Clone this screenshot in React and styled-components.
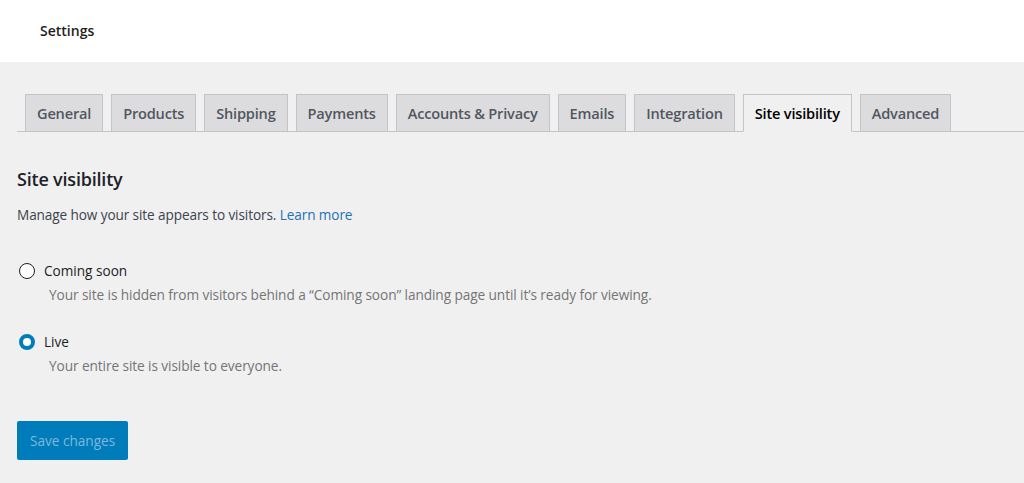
import React, { useState } from "react";
import styled, { createGlobalStyle } from "styled-components";

const GlobalStyle = createGlobalStyle`
  body {
    margin: 0;
    background: #f0f0f1;
    font-family: "Open Sans", "Noto Sans", sans-serif;
    color: #1e1e1e;
  }
`;

const TopBar = styled.header`
  height: 62px;
  background: #fff;
  display: flex;
  align-items: center;
  padding: 0 40px;
  box-sizing: border-box;
`;

const PageTitle = styled.h1`
  margin: 0;
  font-size: 14px;
  font-weight: 600;
  color: #1e1e1e;
  position: relative;
  top: -1px;
`;

const Main = styled.main`
  padding: 32px 0 0 17px;
`;

const TabBar = styled.nav`
  display: flex;
  gap: 8px;
  padding-left: 8px;
  border-bottom: 1px solid #c3c4c7;
  height: 37px;
  align-items: flex-end;
`;

const Tab = styled.button`
  box-sizing: border-box;
  height: ${(p) => (p.$active ? "38px" : "37px")};
  margin-bottom: ${(p) => (p.$active ? "-1px" : "0")};
  padding: 0 11px;
  border: 1px solid #c3c4c7;
  border-bottom: ${(p) => (p.$active ? "1px solid #f0f0f1" : "none")};
  background: ${(p) => (p.$active ? "#f0f0f1" : "#dcdcde")};
  color: ${(p) => (p.$active ? "#000" : "#50575e")};
  font-family: inherit;
  font-size: 14.6px;
  font-weight: 600;
  cursor: pointer;
  letter-spacing: -0.2px;
`;

const Section = styled.section`
  padding-top: 35px;
`;

const Heading = styled.h2`
  margin: 0;
  font-size: 18px;
  font-weight: 600;
  color: #1d2327;
  letter-spacing: -0.2px;
`;

const Intro = styled.p`
  margin: 14px 0 0;
  font-size: 13.6px;
  color: #3c434a;
  letter-spacing: -0.1px;

  a {
    color: #2271b1;
    text-decoration: none;
  }
`;

const Options = styled.div`
  display: flex;
  flex-direction: column;
  gap: 28px;
  margin-top: 37px;
`;

const Option = styled.label`
  display: grid;
  grid-template-columns: 16px 1fr;
  column-gap: 9px;
  row-gap: 5px;
  align-items: center;
  cursor: pointer;
  padding-left: 2px;
`;

const Radio = styled.span`
  width: 16px;
  height: 16px;
  box-sizing: border-box;
  border-radius: 50%;
  background: #fff;
  border: ${(p) => (p.$checked ? "4px solid #007cba" : "1px solid #1e1e1e")};
`;

const OptionLabel = styled.span`
  font-size: 13.6px;
  color: #1e1e1e;
`;

const OptionHelp = styled.span`
  grid-column: 2;
  font-size: 13.7px;
  color: #757575;
  padding-left: 5px;
  letter-spacing: -0.1px;
`;

const SaveButton = styled.button`
  margin-top: 46px;
  height: 39px;
  padding: 0 13px;
  border: none;
  border-radius: 2px;
  background: #007cba;
  color: #7fb8dc;
  font-family: inherit;
  font-size: 13.6px;
  cursor: default;
`;

const tabs = [
  "General",
  "Products",
  "Shipping",
  "Payments",
  "Accounts & Privacy",
  "Emails",
  "Integration",
  "Site visibility",
  "Advanced",
];

const options = [
  {
    id: "coming-soon",
    label: "Coming soon",
    help: "Your site is hidden from visitors behind a \u201cComing soon\u201d landing page until it\u2019s ready for viewing.",
  },
  {
    id: "live",
    label: "Live",
    help: "Your entire site is visible to everyone.",
  },
];

export default function App() {
  const [mode, setMode] = useState("live");
  return (
    <>
      <GlobalStyle />
      <TopBar>
        <PageTitle>Settings</PageTitle>
      </TopBar>
      <Main>
        <TabBar>
          {tabs.map((t) => (
            <Tab key={t} $active={t === "Site visibility"}>
              {t}
            </Tab>
          ))}
        </TabBar>
        <Section>
          <Heading>Site visibility</Heading>
          <Intro>
            Manage how your site appears to visitors. <a href="#">Learn more</a>
          </Intro>
          <Options>
            {options.map((o) => (
              <Option key={o.id} onClick={() => setMode(o.id)}>
                <Radio $checked={mode === o.id} />
                <OptionLabel>{o.label}</OptionLabel>
                <OptionHelp>{o.help}</OptionHelp>
              </Option>
            ))}
          </Options>
          <SaveButton disabled>Save changes</SaveButton>
        </Section>
      </Main>
    </>
  );
}
